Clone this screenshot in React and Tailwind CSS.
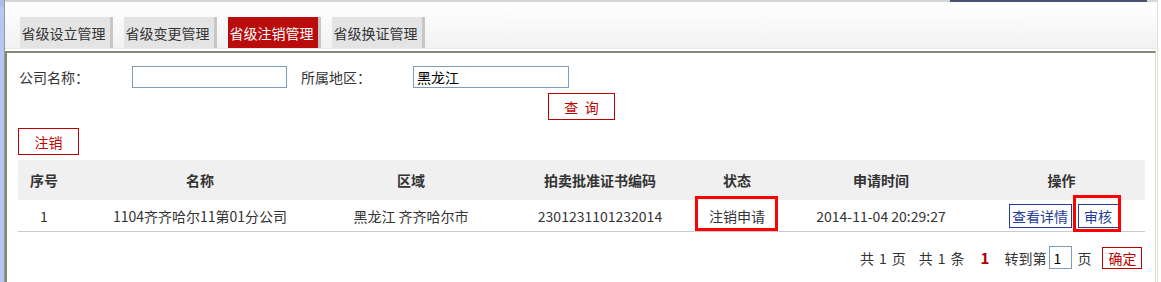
import React from "react";

const tabs = ["省级设立管理", "省级变更管理", "省级注销管理", "省级换证管理"];

const columns = [
  { label: "序号", cls: "" },
  { label: "名称", cls: "" },
  { label: "区域", cls: "" },
  { label: "拍卖批准证书编码", cls: "" },
  { label: "状态", cls: "" },
  { label: "申请时间", cls: "" },
  { label: "操作", cls: "pr-[18px]" },
];

function Tab({ label, active }) {
  return (
    <div
      className={
        "w-[93px] h-[31px] flex items-center justify-center pr-[3px] border-r-[3px] border-[#c6c6c6] text-[14px] " +
        (active ? "bg-[#b90d0d] text-white" : "bg-[#e4e4e4] text-[#333]")
      }
    >
      {label}
    </div>
  );
}

function App() {
  return (
    <div className="flex w-[1161px] h-[282px] bg-white overflow-hidden font-['Noto_Sans_CJK_SC',sans-serif] leading-none text-[#333]">
      <div className="w-[4px] bg-[#b4c8f4] border-t-[7px] border-[#a8bde8]" />
      <div className="w-[1px] bg-[#9a9a9a]" />

      <div className="w-[1153px] flex flex-col border-r border-[#e4e0d4]">
        <div className="h-[2px] bg-[#d6d6d6] flex">
          <div className="ml-[945px] w-[197px] bg-[#4a5274]" />
        </div>

        {/* tab bar */}
        <div className="h-[46px] flex items-end gap-[11px] pl-[15px] bg-gradient-to-b from-[#ffffff] to-[#f2f2f2]">
          {tabs.map((t, i) => (
            <Tab key={t} label={t} active={i === 2} />
          ))}
        </div>
        <div className="h-[1px] bg-[#e8e8e8]" />
        <div className="h-[2px]" />

        {/* panel */}
        <div className="flex-1 border-t-2 border-l-2 border-r border-[#878775] border-r-[#dcd8cc] mr-[1px]">
          <div className="pl-[12px] pt-[13px] flex items-center text-[14px]">
            <span className="w-[113px]">公司名称：</span>
            <input className="w-[155px] h-[22px] border border-[#7f9db9] outline-none" />
            <span className="w-[112px] ml-[14px]">所属地区：</span>
            <input
              className="w-[156px] h-[22px] border border-[#7f9db9] outline-none px-[3px] text-[14px] text-black"
              defaultValue="黑龙江"
            />
          </div>

          <div className="pl-[541px] mt-[5px]">
            <button className="w-[67px] h-[27px] border border-[#c00000] text-[#c00000] text-[14px]">
              查&nbsp;&nbsp;询
            </button>
          </div>

          <div className="pl-[11px] mt-[8px]">
            <button className="w-[61px] h-[27px] border border-[#c00000] text-[#c00000] text-[14px]">
              注销
            </button>
          </div>

          {/* table */}
          <div className="ml-[11px] mt-[5px] w-[1127px]">
            <div className="grid grid-cols-[52px_260px_162px_216px_58px_230px_149px] h-[40px] bg-[#f0f0f0] items-center text-[14px] font-bold text-[#333]">
              {columns.map((c) => (
                <div key={c.label} className={"text-center whitespace-nowrap " + c.cls}>
                  {c.label}
                </div>
              ))}
            </div>
            <div className="relative grid grid-cols-[52px_260px_162px_216px_58px_230px_149px] h-[32px] items-center border-b border-[#cacaca] text-[14px] text-[#333]">
              <div className="text-center">1</div>
              <div className="text-center whitespace-nowrap">1104齐齐哈尔11第01分公司</div>
              <div className="text-center whitespace-nowrap">黑龙江 齐齐哈尔市</div>
              <div className="text-center">2301231101232014</div>
              <div className="text-center whitespace-nowrap">注销申请</div>
              <div className="text-center whitespace-nowrap">2014-11-04 20:29:27</div>
              <div className="flex justify-center gap-[6px] pr-[14px]">
                <button className="w-[63px] h-[24px] border border-[#1f3d99] text-[#1f3d99] text-[14px]">
                  查看详情
                </button>
                <button className="w-[41px] h-[24px] border border-[#1f3d99] text-[#1f3d99] text-[14px]">
                  审核
                </button>
              </div>

              <div className="absolute left-[677px] top-[-4px] w-[83px] h-[35px] border-[3px] border-[#ff0000]" />
              <div className="absolute left-[1055px] top-[-5px] w-[48px] h-[37px] border-[3px] border-[#ff0000]" />
            </div>
          </div>

          {/* pager */}
          <div className="mt-[14px] pl-[853px] flex items-center text-[14px] text-[#333] h-[23px]">
            <span>共</span>
            <span className="ml-[5px]">1</span>
            <span className="ml-[5px]">页</span>
            <span className="ml-[13px]">共</span>
            <span className="ml-[5px]">1</span>
            <span className="ml-[5px]">条</span>
            <span className="ml-[16px] font-bold text-[#a80000] text-[15px]">1</span>
            <span className="ml-[15px]">转到第</span>
            <input
              className="ml-[3px] w-[23px] h-[23px] border border-[#7f9db9] outline-none px-[3px] text-[14px] text-black"
              defaultValue="1"
            />
            <span className="ml-[5px]">页</span>
            <button className="ml-[11px] w-[40px] h-[22px] border border-[#c00000] text-[#c00000] text-[14px]">
              确定
            </button>
          </div>
        </div>
      </div>
    </div>
  );
}

export default App;
